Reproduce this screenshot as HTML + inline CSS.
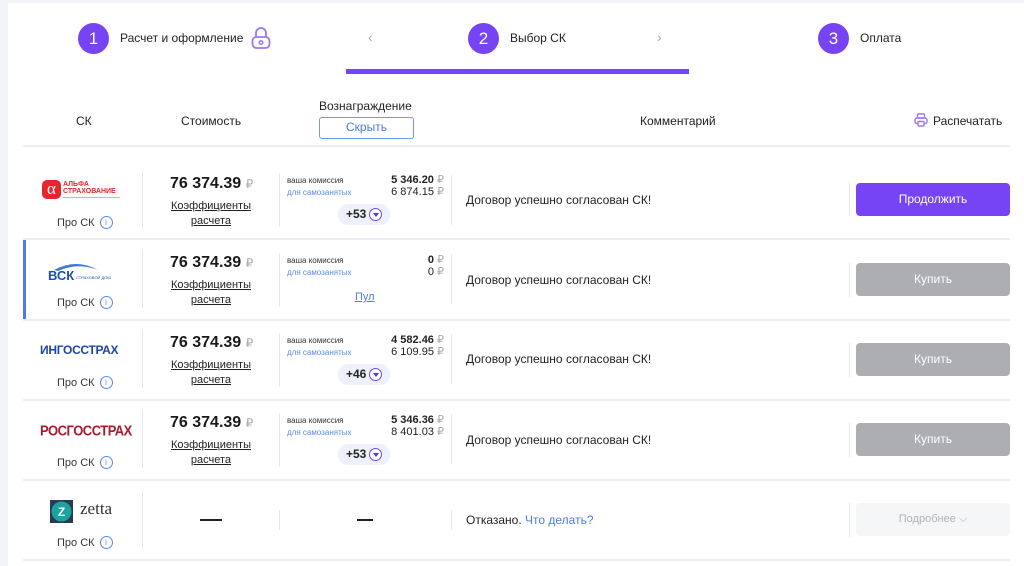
<!DOCTYPE html>
<html><head><meta charset="utf-8"><style>
*{box-sizing:border-box;margin:0;padding:0}
body{width:1024px;height:566px;overflow:hidden;background:#fff;font-family:"Liberation Sans",Arial,sans-serif;color:#222;position:relative}
.a{position:absolute}
.frame{left:0;top:0;width:1024px;height:566px;border-left:8px solid #f2f4f9;border-top:3px solid #f2f4f9}
.circ{width:31px;height:31px;border-radius:50%;background:#7744f5;color:#fff;font-size:17px;text-align:center;line-height:31px}
.st{font-size:12px;color:#222}
.hd{font-size:12px;color:#222}
.line{left:23px;width:987px;height:2px;background:#eceef2}
.vd{width:1px;background:#e6e8ec}
.price{font-size:16px;font-weight:bold;color:#1a1a1a}
.price span{color:#aaa;font-size:12px;font-weight:normal}
.kf{font-size:11px;text-decoration:underline;color:#222;text-align:center;line-height:15px;width:120px}
.vk{font-size:8px;color:#333}
.ds{font-size:8px;color:#5a8ae8}
.num{font-size:11px;text-align:right;width:70px;color:#222}
.num b{font-weight:bold}
.num span{color:#aaa}
.pill{height:21px;padding:0 8px;border-radius:10px;background:#eef1fb;font-size:12px;font-weight:bold;line-height:21px;display:flex;align-items:center;gap:3px}
.dot{width:13px;height:13px;border-radius:50%;border:1.5px solid #7744f5;position:relative;background:#fff}
.dot:after{content:"";position:absolute;left:2.5px;top:3.5px;border-left:3px solid transparent;border-right:3px solid transparent;border-top:4px solid #2a4fd0}
.pro{font-size:11px;color:#333;display:flex;align-items:center;gap:5px}
.i{width:13px;height:13px;border-radius:50%;border:1px solid #5a8ae8;color:#5a8ae8;font-size:8px;text-align:center;line-height:11px}
.cm{font-size:12px;color:#222}
.btn{left:856px;width:154px;height:33px;border-radius:4px;color:#fff;font-size:12px;text-align:center;line-height:33px}
</style></head><body>
<div class="a frame"></div>
<div class="a circ" style="left:78px;top:23px">1</div>
<div class="a st" style="left:120px;top:31px">Расчет и оформление</div>
<svg class="a" style="left:250px;top:26px" width="22" height="24" viewBox="0 0 22 24"><path d="M6 11V7a5 5 0 0 1 10 0v4" fill="none" stroke="#9a78f5" stroke-width="1.8"/><rect x="2.5" y="11" width="17" height="11" rx="4" fill="none" stroke="#9a78f5" stroke-width="1.8"/><circle cx="11" cy="16.5" r="1.8" fill="none" stroke="#9a78f5" stroke-width="1.5"/></svg>
<div class="a" style="left:368px;top:29px;color:#aaa;font-size:14px">‹</div>
<div class="a circ" style="left:468px;top:23px">2</div>
<div class="a st" style="left:510px;top:31px">Выбор СК</div>
<div class="a" style="left:657px;top:29px;color:#aaa;font-size:14px">›</div>
<div class="a" style="left:346px;top:69px;width:343px;height:5px;background:#7744f5"></div>
<div class="a circ" style="left:818px;top:23px">3</div>
<div class="a st" style="left:860px;top:31px">Оплата</div>

<div class="a hd" style="left:76px;top:114px">СК</div>
<div class="a hd" style="left:181px;top:114px">Стоимость</div>
<div class="a hd" style="left:319px;top:99px">Вознаграждение</div>
<div class="a" style="left:319px;top:117px;width:95px;height:22px;border:1.5px solid #6f9af0;border-radius:3px;color:#4a7ae8;font-size:12px;text-align:center;line-height:19px">Скрыть</div>
<div class="a hd" style="left:640px;top:114px">Комментарий</div>
<svg class="a" style="left:914px;top:113px" width="14" height="14" viewBox="0 0 14 14"><rect x="3.5" y="1" width="7" height="4" rx="1" fill="none" stroke="#9a78f5" stroke-width="1.4"/><rect x="1" y="5" width="12" height="5.5" rx="2" fill="none" stroke="#9a78f5" stroke-width="1.4"/><rect x="4" y="8.5" width="6" height="4.5" rx="1" fill="#fff" stroke="#9a78f5" stroke-width="1.4"/></svg>
<div class="a hd" style="left:933px;top:114px">Распечатать</div>
<div class="a line" style="top:145px"></div>

<!-- row 1 -->
<div class="a" style="left:42px;top:180px;width:19px;height:19px;background:#e5262e;border-radius:5px;color:#fff;font-size:17px;text-align:center;line-height:17px;font-family:'Liberation Serif',serif">α</div>
<div class="a" style="left:63px;top:181px;font-size:7px;font-weight:bold;color:#e5262e;line-height:7px">АЛЬФА<br>СТРАХОВАНИЕ</div>
<div class="a" style="left:63px;top:197px;width:57px;height:1px;background:#f3a0a4"></div>
<div class="a pro" style="left:57px;top:216px">Про СК <div class="i">i</div></div>
<div class="a vd" style="left:142px;top:171px;height:58px"></div>
<div class="a price" style="left:170px;top:175px">76 374.39 <span>₽</span></div>
<div class="a kf" style="left:151px;top:199px">Коэффициенты<br>расчета</div>
<div class="a vd" style="left:279px;top:173px;height:54px"></div>
<div class="a vk" style="left:287px;top:176px">ваша комиссия</div>
<div class="a ds" style="left:287px;top:188px">для самозанятых</div>
<div class="a num" style="left:374px;top:173px"><b>5 346.20</b> <span>₽</span></div>
<div class="a num" style="left:374px;top:185px">6 874.15 <span>₽</span></div>
<div class="a pill" style="left:338px;top:204px">+53 <div class="dot"></div></div>
<div class="a vd" style="left:451px;top:175px;height:50px"></div>
<div class="a cm" style="left:466px;top:193px">Договор успешно согласован СК!</div>
<div class="a vd" style="left:849px;top:182px;height:34px"></div>
<div class="a btn" style="top:183px;background:#7744f5">Продолжить</div>
<div class="a line" style="top:238px"></div>

<!-- row 2 -->
<div class="a" style="left:23px;top:240px;width:3px;height:80px;background:#4a7ae8"></div>
<svg class="a" style="left:46px;top:260px" width="74" height="24" viewBox="0 0 74 24"><path d="M8 10 Q30 -2 52 10 Q32 2 12 11Z" fill="#3a7ad8"/><text x="2" y="20" font-family="Liberation Sans" font-weight="bold" font-size="13" fill="#1f4fa8">ВСК</text><text x="30" y="19" font-family="Liberation Sans" font-size="4" fill="#1f4fa8">СТРАХОВОЙ ДОМ</text></svg>
<div class="a pro" style="left:57px;top:296px">Про СК <div class="i">i</div></div>
<div class="a vd" style="left:142px;top:250px;height:58px"></div>
<div class="a price" style="left:170px;top:254px">76 374.39 <span>₽</span></div>
<div class="a kf" style="left:151px;top:278px">Коэффициенты<br>расчета</div>
<div class="a vd" style="left:279px;top:253px;height:54px"></div>
<div class="a vk" style="left:287px;top:256px">ваша комиссия</div>
<div class="a ds" style="left:287px;top:268px">для самозанятых</div>
<div class="a num" style="left:374px;top:253px"><b>0</b> <span>₽</span></div>
<div class="a num" style="left:374px;top:265px">0 <span>₽</span></div>
<div class="a" style="left:355px;top:291px;font-size:11px;color:#4a7ae8;text-decoration:underline">Пул</div>
<div class="a vd" style="left:451px;top:254px;height:50px"></div>
<div class="a cm" style="left:466px;top:273px">Договор успешно согласован СК!</div>
<div class="a vd" style="left:849px;top:263px;height:34px"></div>
<div class="a btn" style="top:263px;background:#acaeb2">Купить</div>
<div class="a line" style="top:319px"></div>

<!-- row 3 -->
<div class="a" style="left:40px;top:343px;font-size:12px;font-weight:bold;color:#1f44a8;letter-spacing:-0.3px">ИНГОССТРАХ</div>
<div class="a pro" style="left:57px;top:376px">Про СК <div class="i">i</div></div>
<div class="a vd" style="left:142px;top:330px;height:58px"></div>
<div class="a price" style="left:170px;top:334px">76 374.39 <span>₽</span></div>
<div class="a kf" style="left:151px;top:358px">Коэффициенты<br>расчета</div>
<div class="a vd" style="left:279px;top:333px;height:54px"></div>
<div class="a vk" style="left:287px;top:336px">ваша комиссия</div>
<div class="a ds" style="left:287px;top:348px">для самозанятых</div>
<div class="a num" style="left:374px;top:333px"><b>4 582.46</b> <span>₽</span></div>
<div class="a num" style="left:374px;top:345px">6 109.95 <span>₽</span></div>
<div class="a pill" style="left:338px;top:364px">+46 <div class="dot"></div></div>
<div class="a vd" style="left:451px;top:334px;height:50px"></div>
<div class="a cm" style="left:466px;top:352px">Договор успешно согласован СК!</div>
<div class="a vd" style="left:849px;top:343px;height:34px"></div>
<div class="a btn" style="top:343px;background:#acaeb2">Купить</div>
<div class="a line" style="top:399px"></div>

<!-- row 4 -->
<div class="a" style="left:40px;top:423px;font-size:13px;font-weight:bold;color:#a8182e;letter-spacing:-0.5px;transform:scaleY(1.1)">РОСГОССТРАХ</div>
<div class="a pro" style="left:57px;top:456px">Про СК <div class="i">i</div></div>
<div class="a vd" style="left:142px;top:410px;height:58px"></div>
<div class="a price" style="left:170px;top:414px">76 374.39 <span>₽</span></div>
<div class="a kf" style="left:151px;top:438px">Коэффициенты<br>расчета</div>
<div class="a vd" style="left:279px;top:413px;height:54px"></div>
<div class="a vk" style="left:287px;top:416px">ваша комиссия</div>
<div class="a ds" style="left:287px;top:428px">для самозанятых</div>
<div class="a num" style="left:374px;top:413px"><b>5 346.36</b> <span>₽</span></div>
<div class="a num" style="left:374px;top:425px">8 401.03 <span>₽</span></div>
<div class="a pill" style="left:338px;top:444px">+53 <div class="dot"></div></div>
<div class="a vd" style="left:451px;top:414px;height:50px"></div>
<div class="a cm" style="left:466px;top:433px">Договор успешно согласован СК!</div>
<div class="a vd" style="left:849px;top:423px;height:34px"></div>
<div class="a btn" style="top:423px;background:#acaeb2">Купить</div>
<div class="a line" style="top:479px"></div>

<!-- row 5 -->
<svg class="a" style="left:49px;top:499px" width="25" height="25" viewBox="0 0 25 25"><rect x="1" y="1" width="23" height="23" fill="#2a3a5a"/><circle cx="12.5" cy="12.5" r="10" fill="#1ba39c"/><text x="12.5" y="17" text-anchor="middle" font-family="Liberation Sans" font-weight="bold" font-size="12" fill="#fff">Z</text></svg>
<div class="a" style="left:80px;top:499px;font-family:'Liberation Serif',serif;font-size:17px;color:#333">zetta</div>
<div class="a pro" style="left:57px;top:536px">Про СК <div class="i">i</div></div>
<div class="a vd" style="left:142px;top:491px;height:58px"></div>
<div class="a" style="left:200px;top:519px;width:22px;height:2px;background:#222"></div>
<div class="a vd" style="left:279px;top:510px;height:20px"></div>
<div class="a" style="left:357px;top:519px;width:16px;height:2px;background:#222"></div>
<div class="a vd" style="left:451px;top:510px;height:20px"></div>
<div class="a cm" style="left:466px;top:513px">Отказано. <span style="color:#4a7ae8">Что делать?</span></div>
<div class="a vd" style="left:849px;top:503px;height:34px"></div>
<div class="a btn" style="top:503px;background:#f5f6f8;color:#b0b3b8;font-size:11px">Подробнее ⌵</div>
<div class="a line" style="top:559px"></div>
</body></html>
